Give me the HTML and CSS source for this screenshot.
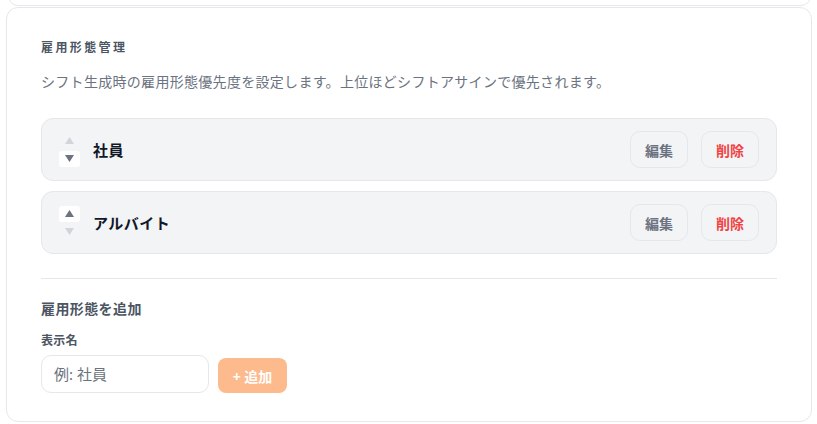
FILE: index.html
```html
<!DOCTYPE html>
<html lang="ja">
<head>
<meta charset="utf-8">
<title>雇用形態管理</title>
<link rel="stylesheet" href="styles.css">
</head>
<body>
<div class="page">
  <div class="prev-card"></div>
  <section class="card">
    <h2 class="title">雇用形態管理</h2>
    <p class="desc">シフト生成時の雇用形態優先度を設定します。上位ほどシフトアサインで優先されます。</p>
    <ul class="list">
      <li class="row">
        <div class="order">
          <button class="arrow disabled" aria-label="上へ"><svg width="9" height="7" viewBox="0 0 9 7"><path d="M4.5 0 L9 7 L0 7 Z"/></svg></button>
          <button class="arrow active" aria-label="下へ"><svg width="9" height="7" viewBox="0 0 9 7"><path d="M0 0 L9 0 L4.5 7 Z"/></svg></button>
        </div>
        <span class="name">社員</span>
        <div class="actions">
          <button class="btn edit">編集</button>
          <button class="btn del">削除</button>
        </div>
      </li>
      <li class="row">
        <div class="order">
          <button class="arrow active" aria-label="上へ"><svg width="9" height="7" viewBox="0 0 9 7"><path d="M4.5 0 L9 7 L0 7 Z"/></svg></button>
          <button class="arrow disabled" aria-label="下へ"><svg width="9" height="7" viewBox="0 0 9 7"><path d="M0 0 L9 0 L4.5 7 Z"/></svg></button>
        </div>
        <span class="name">アルバイト</span>
        <div class="actions">
          <button class="btn edit">編集</button>
          <button class="btn del">削除</button>
        </div>
      </li>
    </ul>
    <div class="add">
      <h3 class="add-title">雇用形態を追加</h3>
      <label class="label" for="nm">表示名</label>
      <div class="add-form">
        <input id="nm" class="input" type="text" placeholder="例: 社員">
        <button class="add-btn">+ 追加</button>
      </div>
    </div>
  </section>
</div>
</body>
</html>
```

FILE: styles.css
```css
* { box-sizing: border-box; }
html, body { margin: 0; padding: 0; background: #ffffff; }
body {
  font-family: "Noto Sans", "Noto Sans CJK JP", sans-serif;
  color: #111827;
}
.page {
  padding: 0 5px 0 6px;
  overflow: hidden;
  height: 424px;
}
.prev-card {
  height: 20px;
  margin: -14px 1px 0 2px;
  border: 1px solid #e5e7eb;
  border-radius: 12px;
  background: #fff;
}
.card {
  margin-top: 1px;
  border: 1px solid #e5e7eb;
  border-radius: 12px;
  background: #fff;
  padding: 32px 34px 28px 34px;
}
.title {
  margin: 0;
  font-size: 12px;
  line-height: 16px;
  font-weight: 700;
  letter-spacing: 0.2em;
  color: #4b5563;
}
.desc {
  margin: 16px 0 0;
  font-size: 14px;
  line-height: 20px;
  letter-spacing: 0.3px;
  color: #6b7280;
}
.list {
  list-style: none;
  margin: 26px 0 0;
  padding: 0;
  display: flex;
  flex-direction: column;
  gap: 10px;
}
.row {
  height: 63px;
  display: flex;
  align-items: center;
  padding: 0 17px;
  background: #f3f4f6;
  border: 1px solid #e5e7eb;
  border-radius: 12px;
}
.order {
  display: flex;
  flex-direction: column;
  gap: 2px;
  width: 21px;
}
.arrow {
  width: 21px;
  height: 16px;
  padding: 0;
  border: 0;
  border-radius: 3px;
  background: transparent;
  display: flex;
  align-items: center;
  justify-content: center;
}
.arrow.active { background: #ffffff; }
.arrow.active svg { fill: #6b7280; }
.arrow.disabled svg { fill: #d1d5db; }
.name {
  margin-left: 13px;
  font-size: 15px;
  letter-spacing: 0.5px;
  font-weight: 700;
  color: #111827;
}
.actions {
  margin-left: auto;
  display: flex;
  gap: 13px;
}
.btn {
  height: 37px;
  padding: 0 14px;
  border: 1px solid #e5e7eb;
  border-radius: 10px;
  background: #f3f4f6;
  font-family: inherit;
  font-size: 14px;
  font-weight: 700;
}
.btn.edit { color: #6b7280; }
.btn.del { color: #ef4444; }
.add {
  margin-top: 24px;
  border-top: 1px solid #e5e7eb;
  padding-top: 20px;
}
.add-title {
  margin: 0;
  font-size: 14px;
  line-height: 20px;
  letter-spacing: 0.4px;
  font-weight: 700;
  color: #4b5563;
}
.label {
  display: block;
  margin-top: 14px;
  font-size: 12px;
  line-height: 16px;
  letter-spacing: 0.3px;
  font-weight: 700;
  color: #4b5563;
}
.add-form {
  margin-top: 6px;
  display: flex;
  align-items: flex-end;
  gap: 9px;
}
.input {
  width: 168px;
  height: 38px;
  padding: 0 12px;
  border: 1px solid #e5e7eb;
  border-radius: 10px;
  font-family: inherit;
  font-size: 15px;
  color: #111827;
  background: #fff;
  outline: none;
}
.input::placeholder { color: #6b7280; }
.add-btn {
  width: 69px;
  height: 35px;
  border: 0;
  border-radius: 8px;
  background: #fdba8c;
  color: #ffffff;
  font-family: inherit;
  font-size: 14px;
  font-weight: 700;
}
```
